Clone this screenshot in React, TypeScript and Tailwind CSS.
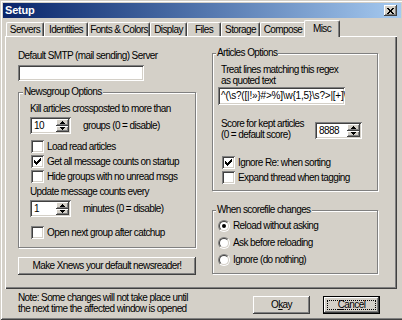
import React from "react"

const raised =
  "bg-[#d4d0c8] shadow-[inset_-1px_-1px_0_#404040,inset_1px_1px_0_#ffffff,inset_-2px_-2px_0_#808080]"
const sunken =
  "bg-white shadow-[inset_1px_1px_0_#808080,inset_-1px_-1px_0_#ffffff,inset_2px_2px_0_#404040,inset_-2px_-2px_0_#d4d0c8]"
const etched = "border border-[#808080] shadow-[1px_1px_0_#ffffff,inset_1px_1px_0_#ffffff]"

const tabs = [
  { label: "Servers", w: "w-[38px]" },
  { label: "Identities", w: "w-[44px]" },
  { label: "Fonts & Colors", w: "w-[62px]" },
  { label: "Display", w: "w-[37px]" },
  { label: "Files", w: "w-[34px]" },
  { label: "Storage", w: "w-[39px]" },
  { label: "Compose", w: "w-[46px]" },
]

const regex = "^(\\s?([|!»}#>%]\\w{1,5}\\s?>|[+]\\w{1,5}>)"

function Arrow({ up }: { up?: boolean }) {
  return (
    <svg width="5" height="3" viewBox="0 0 5 3" shapeRendering="crispEdges">
      <path d={up ? "M2 0h1v1h1v1h1v1H0V2h1V1h1z" : "M0 0h5v1H4v1H3v1H2V2H1V1H0z"} fill="#000" />
    </svg>
  )
}

function Spinner({ value, w }: { value: string; w: string }) {
  return (
    <div className={`${sunken} ${w} h-[17px] flex items-stretch p-[2px]`}>
      <span className="flex-1 pl-[2px] leading-[13px]">{value}</span>
      <div className="flex flex-col w-[13px]">
        <div className={`${raised} flex-1 flex items-center justify-center`}>
          <Arrow up />
        </div>
        <div className={`${raised} flex-1 flex items-center justify-center`}>
          <Arrow />
        </div>
      </div>
    </div>
  )
}

function Check({ label, checked }: { label: string; checked?: boolean }) {
  return (
    <div className="h-[15px] flex items-center">
      <div className={`${sunken} w-[13px] h-[13px] shrink-0 flex items-center justify-center`}>
        {checked && (
          <svg width="7" height="7" viewBox="0 0 7 7" shapeRendering="crispEdges">
            <path
              d="M6 0h1v3H6v1H5v1H4v1H3v1H2V6H1V5H0V2h1v1h1v1h1V3h1V2h1V1h1z"
              fill="#000"
            />
          </svg>
        )}
      </div>
      <span className="ml-[3px] leading-[13px] whitespace-nowrap">{label}</span>
    </div>
  )
}

function Radio({ label, checked }: { label: string; checked?: boolean }) {
  return (
    <div className="h-[17px] flex items-center">
      <div className="w-[12px] h-[12px] shrink-0 rounded-full border border-t-[#808080] border-l-[#808080] border-r-white border-b-white">
        <div className="w-full h-full rounded-full bg-white border border-t-[#404040] border-l-[#404040] border-r-[#d4d0c8] border-b-[#d4d0c8] flex items-center justify-center">
          {checked && <div className="w-[4px] h-[4px] rounded-full bg-black" />}
        </div>
      </div>
      <span className="ml-[3px] leading-[13px] whitespace-nowrap">{label}</span>
    </div>
  )
}

function Button({ children, w, def }: { children: React.ReactNode; w: string; def?: boolean }) {
  if (def) {
    return (
      <div className={`${w} h-[18px] border border-black`}>
        <div className={`${raised} w-full h-full p-[3px]`}>
          <div className="w-full h-full border border-dotted border-black flex items-center justify-center leading-none">
            {children}
          </div>
        </div>
      </div>
    )
  }
  return (
    <div className={`${raised} ${w} h-[18px] flex items-center justify-center leading-none whitespace-nowrap`}>
      {children}
    </div>
  )
}

export default function App() {
  return (
    <div className="w-[402px] h-[320px] overflow-hidden bg-[#d4d0c8]">
      <div className="w-[404px] h-[320px] bg-[#d4d0c8] p-[3px] flex flex-col text-[10px] tracking-[-0.6px] text-black font-['Liberation_Sans',Arial,sans-serif] shadow-[inset_1px_1px_0_#d4d0c8,inset_-1px_-1px_0_#404040,inset_2px_2px_0_#ffffff,inset_-2px_-2px_0_#808080]">
        {/* Title bar */}
        <div className="h-[15px] flex items-center bg-linear-to-r from-[#0a246a] to-[#a6caf0] pl-[2px] pr-[4px]">
          <span className="text-white text-[11px] font-bold leading-none tracking-[-0.2px]">Setup</span>
          <div className={`${raised} ml-auto w-[13px] h-[11px] flex items-center justify-center`}>
            <svg width="7" height="6" viewBox="0 0 7 6" shapeRendering="crispEdges">
              <path d="M0 0h2v1h1v1h1V1h1V0h2v1H6v1H5v2h1v1h1v1H5V5H4V4H3v1H2v1H0V5h1V4h1V2H1V1H0z" fill="#000" />
            </svg>
          </div>
        </div>

        {/* Tabs */}
        <div className="h-[18px] flex items-end pl-[3px]">
          {tabs.map((t) => (
            <div
              key={t.label}
              className={`${t.w} h-[14px] flex items-center justify-center leading-none whitespace-nowrap border-l border-t border-white border-r border-r-[#404040] rounded-t-[2px] shadow-[inset_-1px_0_0_#808080]`}
            >
              {t.label}
            </div>
          ))}
          <div className="relative z-10 -ml-[2px] -mb-[1px] w-[36px] h-[17px] pb-[1px] flex items-center justify-center leading-none bg-[#d4d0c8] border-l border-t border-white border-r border-r-[#404040] rounded-t-[2px] shadow-[inset_-1px_0_0_#808080]">
            Misc
          </div>
        </div>

        {/* Panel */}
        <div className="ml-[2px] w-[392px] h-[253px] border-t border-l border-white shadow-[inset_-1px_-1px_0_#404040,inset_-2px_-2px_0_#808080] flex pl-[12px] pt-[12px]">
          {/* Left column */}
          <div className="w-[178px] flex flex-col">
            <div className="leading-[13px]">Default SMTP (mail sending) Server</div>
            <div className={`${sunken} mt-[3px] w-[126px] h-[16px]`} />

            <div className={`relative ${etched} mt-[11px] h-[156px] flex flex-col pl-[11px] pt-[9px]`}>
              <span className="absolute left-[4px] top-[-8px] px-[1px] bg-[#d4d0c8] leading-[13px]">
                Newsgroup Options
              </span>
              <div className="leading-[13px] whitespace-nowrap">Kill articles crossposted to more than</div>
              <div className="mt-[2px] flex items-center">
                <Spinner value="10" w="w-[41px]" />
                <span className="ml-[12px] leading-[13px]">groups (0 = disable)</span>
              </div>
              <div className="mt-[5px] pl-[1px] flex flex-col">
                <Check label="Load read articles" />
                <Check label="Get all message counts on startup" checked />
                <Check label="Hide groups with no unread msgs" />
              </div>
              <div className="mt-[1px] leading-[13px]">Update message counts every</div>
              <div className="mt-[2px] flex items-center">
                <Spinner value="1" w="w-[41px]" />
                <span className="ml-[12px] leading-[13px]">minutes (0 = disable)</span>
              </div>
              <div className="mt-[8px] pl-[1px]">
                <Check label="Open next group after catchup" />
              </div>
            </div>

            <div className="mt-[9px]">
              <Button w="w-[178px]">Make Xnews your default newsreader!</Button>
            </div>
          </div>

          {/* Right column */}
          <div className="ml-[16px] w-[166px] flex flex-col">
            <div className={`relative ${etched} mt-[4px] h-[138px] flex flex-col pl-[5px] pt-[10px]`}>
              <span className="absolute left-[3px] top-[-8px] px-[1px] bg-[#d4d0c8] leading-[13px]">
                Articles Options
              </span>
              <div className="pl-[3px] leading-[11px]">
                <div>Treat lines matching this regex</div>
                <div>as quoted text</div>
              </div>
              <div className={`${sunken} mt-[1px] w-[127px] h-[18px] overflow-hidden whitespace-nowrap pl-[3px] flex items-center leading-none tracking-[-0.2px]`}>
                {regex}
              </div>
              <div className="mt-[13px] flex items-start">
                <div className="w-[97px] pl-[3px] leading-[11px] whitespace-nowrap">
                  <div>Score for kept articles</div>
                  <div>(0 = default score)</div>
                </div>
                <div className="mt-[4px]">
                  <Spinner value="8888" w="w-[47px]" />
                </div>
              </div>
              <div className="mt-[15px] pl-[4px] flex flex-col">
                <Check label="Ignore Re: when sorting" checked />
                <Check label="Expand thread when tagging" />
              </div>
            </div>

            <div className={`relative ${etched} mt-[19px] h-[64px] flex flex-col pl-[5px] pt-[6px]`}>
              <span className="absolute left-[3px] top-[-8px] px-[1px] bg-[#d4d0c8] leading-[13px]">
                When scorefile changes
              </span>
              <Radio label="Reload without asking" checked />
              <Radio label="Ask before reloading" />
              <Radio label="Ignore (do nothing)" />
            </div>
          </div>
        </div>

        {/* Bottom row */}
        <div className="flex items-start">
          <div className="ml-[15px] mt-[3px] leading-[11px] whitespace-nowrap">
            <div>Note: Some changes will not take place until</div>
            <div>the next time the affected window is opened</div>
          </div>
          <div className="ml-auto mr-[21px] mt-[7px] flex gap-[13px]">
            <Button w="w-[57px]">
              <span>
                O<span className="underline">k</span>ay
              </span>
            </Button>
            <Button w="w-[57px]" def>
              <span>
                <span className="underline">C</span>ancel
              </span>
            </Button>
          </div>
        </div>
      </div>
    </div>
  )
}
